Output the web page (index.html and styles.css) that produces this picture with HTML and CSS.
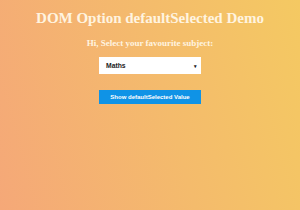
FILE: index.html
```html
<!DOCTYPE html>
<html>
<head>
<meta charset="utf-8">
<link rel="stylesheet" href="styles.css">
</head>
<body>
<main class="page">
  <h1 class="title">DOM Option defaultSelected Demo</h1>
  <h2 class="subtitle">Hi, Select your favourite subject:</h2>
  <div class="select">
    <span class="select-value">Maths</span>
    <span class="select-arrow">&#9662;</span>
  </div>
  <button class="btn">Show defaultSelected Value</button>
</main>
</body>
</html>
```
FILE: styles.css
```css
html, body {
  margin: 0;
  padding: 0;
  width: 300px;
  height: 210px;
  overflow: hidden;
}
body {
  background: linear-gradient(75deg, #f5a878 0%, #f4bb6c 55%, #f4c962 100%);
  font-family: "Liberation Serif", serif;
}
.page {
  display: flex;
  flex-direction: column;
  align-items: center;
  padding-top: 9px;
}
.title {
  margin: 0;
  font-size: 15px;
  font-weight: bold;
  color: #fff4e0;
  line-height: 18px;
}
.subtitle {
  margin: 9.5px 0 0;
  font-size: 9px;
  font-weight: bold;
  color: #fff4e0;
  line-height: 12px;
}
.select {
  margin-top: 8.5px;
  width: 102px;
  height: 17px;
  box-sizing: border-box;
  background: #fff;
  display: flex;
  align-items: center;
  justify-content: space-between;
  padding: 0 4px 0 7px;
  font-family: "Liberation Sans", sans-serif;
  font-size: 6.8px;
  font-weight: bold;
  color: #222;
}
.select-arrow {
  font-size: 5px;
}
.btn {
  margin-top: 16px;
  width: 102px;
  height: 14px;
  border: none;
  padding: 0;
  background: #0f93e6;
  color: #fff;
  font-family: "Liberation Sans", sans-serif;
  font-size: 6px;
  font-weight: bold;
}
```
